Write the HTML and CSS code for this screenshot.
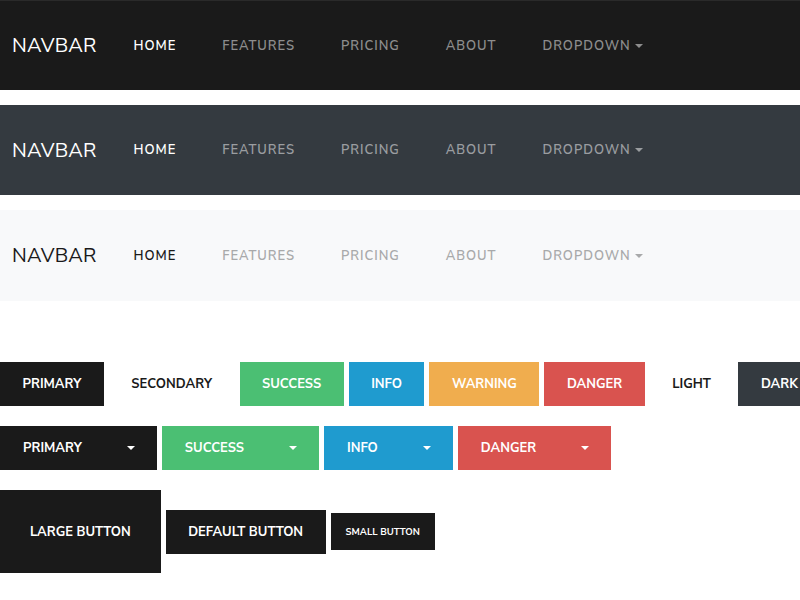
FILE: index.html
```html
<!DOCTYPE html>
<html lang="en">
<head>
  <meta charset="UTF-8" />
  <title>Navbars and buttons</title>
  <link rel="stylesheet" href="styles.css">
</head>
<body>

  <nav class="navbar navbar-primary">
    <a class="brand">NAVBAR</a>
    <a class="nav-link active">HOME</a>
    <a class="nav-link">FEATURES</a>
    <a class="nav-link">PRICING</a>
    <a class="nav-link">ABOUT</a>
    <a class="nav-link">DROPDOWN<span class="caret"></span></a>
  </nav>

  <nav class="navbar navbar-dark">
    <a class="brand">NAVBAR</a>
    <a class="nav-link active">HOME</a>
    <a class="nav-link">FEATURES</a>
    <a class="nav-link">PRICING</a>
    <a class="nav-link">ABOUT</a>
    <a class="nav-link">DROPDOWN<span class="caret"></span></a>
  </nav>

  <nav class="navbar navbar-light">
    <a class="brand">NAVBAR</a>
    <a class="nav-link active">HOME</a>
    <a class="nav-link">FEATURES</a>
    <a class="nav-link">PRICING</a>
    <a class="nav-link">ABOUT</a>
    <a class="nav-link">DROPDOWN<span class="caret"></span></a>
  </nav>

  <div class="buttons">
    <div class="btn-row">
      <button class="btn btn-primary">Primary</button>
      <button class="btn btn-secondary">Secondary</button>
      <button class="btn btn-success">Success</button>
      <button class="btn btn-info">Info</button>
      <button class="btn btn-warning">Warning</button>
      <button class="btn btn-danger">Danger</button>
      <button class="btn btn-light">Light</button>
      <button class="btn btn-dark">Dark</button>
    </div>

    <div class="btn-row">
      <button class="btn btn-primary dropdown">Primary<span class="caret"></span></button>
      <button class="btn btn-success dropdown">Success<span class="caret"></span></button>
      <button class="btn btn-info dropdown">Info<span class="caret"></span></button>
      <button class="btn btn-danger dropdown">Danger<span class="caret"></span></button>
    </div>

    <div class="btn-row">
      <button class="btn btn-primary btn-lg">Large button</button>
      <button class="btn btn-primary">Default button</button>
      <button class="btn btn-primary btn-sm">Small button</button>
    </div>
  </div>

</body>
</html>
```

FILE: styles.css
```css
body {
  margin: 0;
  background: #fff;
  font-family: "Nunito Sans", Lato, "Open Sans", sans-serif;
  overflow: hidden;
}

.navbar {
  display: flex;
  align-items: center;
  height: 90px;
  padding-left: 12px;
  margin-bottom: 15px;
  box-sizing: border-box;
}
.navbar-light {
  height: 91px;
}
.brand {
  font-size: 20px;
  letter-spacing: 0.2px;
  margin-right: 14px;
}
.nav-link {
  font-size: 13px;
  font-weight: 600;
  letter-spacing: 0.95px;
  padding: 0 23px;
  display: flex;
  align-items: center;
}
.nav-link .caret {
  margin-left: 4px;
}

.navbar-primary { background: #1a1a1a; border-top: 1px solid #2a2a2a; }
.navbar-dark { background: #343a40; }
.navbar-light { background: #f8f9fa; }

.navbar-primary .brand, .navbar-dark .brand { color: #fff; }
.navbar-primary .nav-link { color: #8d8d8d; }
.navbar-dark .nav-link { color: #9a9da0; }
.navbar-primary .nav-link.active, .navbar-dark .nav-link.active { color: #fff; }
.navbar-light .brand { color: #1a1a1a; }
.navbar-light .nav-link { color: #a8a9aa; }
.navbar-light .nav-link.active { color: #1a1a1a; }

.caret {
  display: inline-block;
  width: 0;
  height: 0;
  border-top: 4px solid currentColor;
  border-left: 4px solid transparent;
  border-right: 4px solid transparent;
}

.buttons {
  padding-top: 46px;
}
.btn-row {
  display: flex;
  align-items: center;
  gap: 5px;
  margin-bottom: 20px;
  white-space: nowrap;
}
.btn {
  font-family: inherit;
  font-size: 13px;
  font-weight: 700;
  text-transform: uppercase;
  height: 44px;
  padding: 0 22.5px;
  border: 0;
  color: #fff;
  flex-shrink: 0;
}
.btn-primary { background: #1a1a1a; }
.btn-secondary { background: #fff; color: #1a1a1a; }
.btn-success { background: #4bbf73; }
.btn-info { background: #1f9bcf; }
.btn-warning { background: #f0ad4e; }
.btn-danger { background: #d9534f; }
.btn-light { background: #fff; color: #1a1a1a; }
.btn-dark { background: #343a40; }

.dropdown {
  display: flex;
  align-items: center;
  padding: 0 22px 0 23px;
}
.dropdown .caret {
  margin-left: 45px;
}

.btn-lg {
  height: 83px;
  padding: 0 30px;
}
.btn-sm {
  height: 37px;
  padding: 0 15px;
  font-size: 9.5px;
}
```
